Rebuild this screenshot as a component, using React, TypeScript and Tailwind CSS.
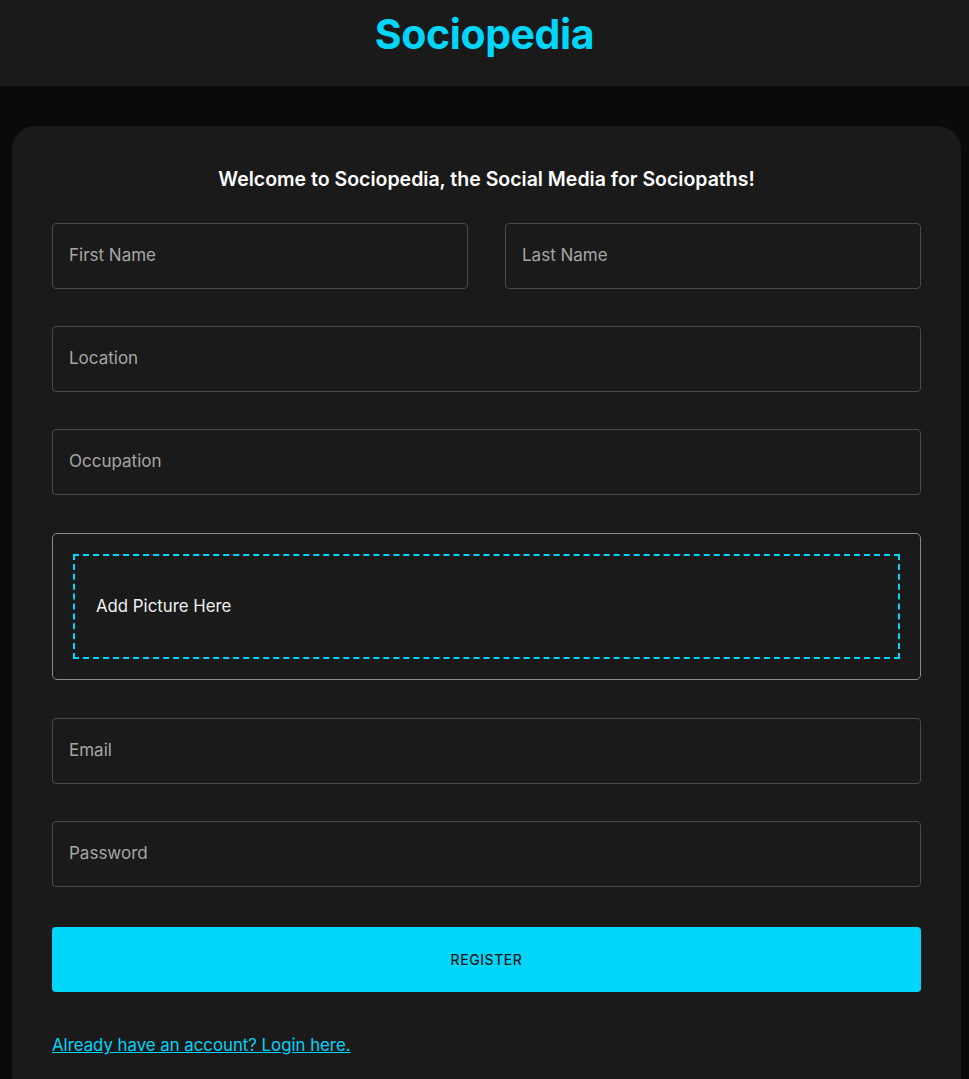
const font = { fontFamily: "Inter, 'Noto Sans', sans-serif" }

function Field({ label }: { label: string }) {
  return (
    <div className="flex h-[66px] items-center rounded-[4px] border border-[#4a4a4a] px-4">
      <span className="text-[17px] text-[#a6a6a6]">{label}</span>
    </div>
  )
}

export default function App() {
  return (
    <div className="min-h-[1079px] bg-[#0a0a0a]" style={font}>
      <header className="flex h-[86px] justify-center bg-[#1a1a1a] pt-[10px]">
        <h1 className="text-[41px] font-bold leading-[1.2] tracking-[-0.01em] text-[#00d5fa]">Sociopedia</h1>
      </header>

      <main className="ml-[12px] mr-[8px] mt-[40px] rounded-[24px] bg-[#1a1a1a] px-10 pb-20 pt-[41px]">
        <h2 className="mb-[32px] text-center text-[19.5px] font-semibold leading-[24px] text-white">
          Welcome to Sociopedia, the Social Media for Sociopaths!
        </h2>

        <form className="grid grid-cols-2 gap-x-[37px] gap-y-[37px]">
          <Field label="First Name" />
          <Field label="Last Name" />
          <div className="col-span-2">
            <Field label="Location" />
          </div>
          <div className="col-span-2">
            <Field label="Occupation" />
          </div>
          <div className="col-span-2 mt-[1px] rounded-[5px] border border-[#8a8a8a] p-5">
            <div className="flex h-[105px] items-center border-2 border-dashed border-[#00d5fa] px-[21px]">
              <span className="text-[16.8px] text-[#f0f0f0]">Add Picture Here</span>
            </div>
          </div>
          <div className="col-span-2 mt-[1px]">
            <Field label="Email" />
          </div>
          <div className="col-span-2">
            <Field label="Password" />
          </div>
        </form>

        <button
          type="button"
          className="mt-[40px] flex h-[65px] w-full items-center justify-center rounded-[4px] bg-[#00d5fa] text-[14px] font-medium tracking-[0.04em] text-[#1a1a1a]"
        >
          REGISTER
        </button>

        <div className="mt-[41px]">
          <a href="#" className="text-[16.8px] text-[#00d5fa] underline">
            Already have an account? Login here.
          </a>
        </div>
      </main>
    </div>
  )
}
